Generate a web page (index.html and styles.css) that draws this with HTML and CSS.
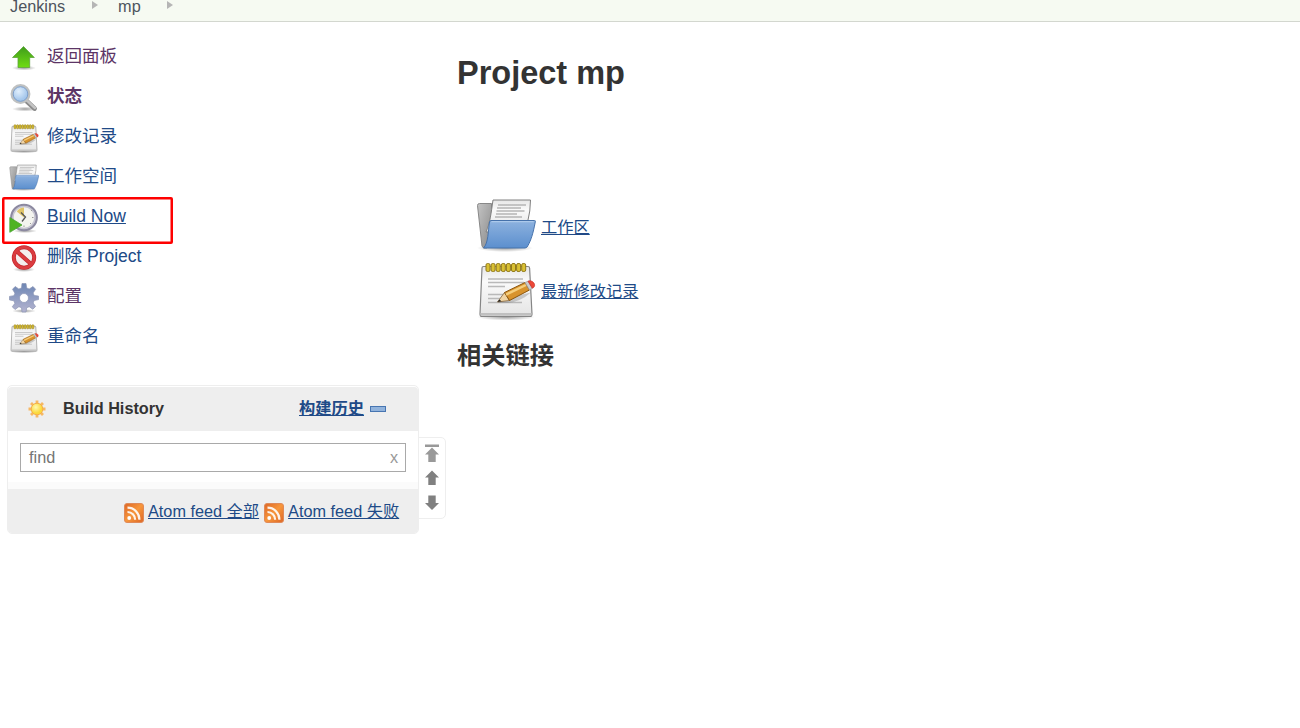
FILE: index.html
```html
<!DOCTYPE html>
<html lang="zh-CN">
<head>
<meta charset="utf-8">
<title>mp [Jenkins]</title>
<link rel="stylesheet" href="styles.css">
</head>
<body>
<svg class="defs" aria-hidden="true">
  <defs>
    <linearGradient id="green" x1="0" y1="0" x2="0" y2="1"><stop offset="0" stop-color="#3f9c1c"/><stop offset="1" stop-color="#6fdc12"/></linearGradient>
    <linearGradient id="blue" x1="0" y1="0" x2="0" y2="1"><stop offset="0" stop-color="#8db2df"/><stop offset="1" stop-color="#5c8fce"/></linearGradient>
    <linearGradient id="paper" x1="0" y1="0" x2="0" y2="1"><stop offset="0" stop-color="#e6e6e6"/><stop offset=".3" stop-color="#fafafa"/><stop offset="1" stop-color="#e4e4e4"/></linearGradient>
    <linearGradient id="gray" x1="0" y1="0" x2="1" y2="1"><stop offset="0" stop-color="#c4c4c4"/><stop offset="1" stop-color="#8a8a8a"/></linearGradient>
    <linearGradient id="steel" x1="0" y1="0" x2="0" y2="1"><stop offset="0" stop-color="#6d86b4"/><stop offset="1" stop-color="#b4b4d0"/></linearGradient>
    <linearGradient id="orange" x1="0" y1="0" x2="1" y2="1"><stop offset="0" stop-color="#dc6626"/><stop offset=".5" stop-color="#f7963c"/><stop offset="1" stop-color="#dc6626"/></linearGradient>
    <radialGradient id="lens" cx=".4" cy=".35"><stop offset="0" stop-color="#e1effc"/><stop offset="1" stop-color="#a5c7ec"/></radialGradient>
    <radialGradient id="sunfill" cx=".4" cy=".35"><stop offset="0" stop-color="#fff9b0"/><stop offset="1" stop-color="#fbd93c"/></radialGradient>
    <radialGradient id="shadow"><stop offset="0" stop-color="#000" stop-opacity=".38"/><stop offset="1" stop-color="#000" stop-opacity="0"/></radialGradient>
  </defs>
  <symbol id="folder" viewBox="0 0 60 60">
    <ellipse cx="29" cy="52" rx="28" ry="4" fill="url(#shadow)"/>
    <path d="M1.500 9.500q0-2 2-2h12v40l-5 4.500H7.500L6 50z" fill="url(#gray)" stroke="#888"/>
    <path d="M17 4H54.500q-.2 12-2.500 20l-14 12H10c4-9 5-18 7-32z" fill="url(#paper)" stroke="#808080"/>
    <path d="M22 9h28M21 12h24M20.500 15h28M20 18h21M19 21h27" stroke="#b5b5b5" stroke-width="1.300"/>
    <path d="M15 24.500H58.500q1.200 0 .8 1.300C57 38 55 44 52 49.500q-1 2.500-3 2.500H7.500c5-5 4.500-17 6-26q.3-1.500 1.500-1.500z" fill="url(#blue)" stroke="#4672ab"/>
    <path d="M15.500 25.700h42" stroke="#b4cfee"/>
  </symbol>
  <symbol id="note" viewBox="0 0 60 60">
    <ellipse cx="30" cy="57" rx="29" ry="3.500" fill="url(#shadow)"/>
    <path d="M7.500 6.500h44.500q1.500 0 1.600 1.500L56 54q0 2.500-2 2.500H6q-2 0-2-2.500L6 8q0-1.500 1.500-1.500z" fill="url(#paper)" stroke="#858585" stroke-width="1.200"/>
    <path d="M4.500 53h51v2.700h-51z" fill="#c0c0c0"/>
    <path d="M12 19h35M12 22.500h36M12 26.500h17M12 34.500h27M12 38.500h22M12 42.500h34" stroke="#b9b9b9" stroke-width="1.500"/>
    <g fill="#d9c033" stroke="#91791b" stroke-width="1"><rect x="10" y="3.500" width="4" height="8" rx="1.500"/><rect x="15.100" y="3.500" width="4" height="8" rx="1.500"/><rect x="20.200" y="3.500" width="4" height="8" rx="1.500"/><rect x="25.300" y="3.500" width="4" height="8" rx="1.500"/><rect x="30.400" y="3.500" width="4" height="8" rx="1.500"/><rect x="35.500" y="3.500" width="4" height="8" rx="1.500"/><rect x="40.600" y="3.500" width="4" height="8" rx="1.500"/><rect x="45.700" y="3.500" width="4" height="8" rx="1.500"/></g>
    <path d="M22 42.500q18 3 33-10l-23 5z" fill="#777" opacity=".35"/>
    <path d="M21.500 42l7-9.500 5 8z" fill="#f0d4a4" stroke="#76552a" stroke-width=".7"/>
    <path d="M28.500 32.500L49 22.500l4.500 7.500-20 10.500z" fill="#d8932d" stroke="#8b560e"/>
    <path d="M29.500 33.500L49.300 24l1.200 2-20 9.800z" fill="#f5ce7c"/>
    <path d="M49 22.500l3-1.300 4.300 7-2.800 1.800z" fill="#ccc" stroke="#999" stroke-width=".7"/>
    <path d="M52 21.200c5-2 9.500 5 4.300 7z" fill="#ec4837" stroke="#c8322c" stroke-width=".7"/>
    <path d="M21.500 42l1.900-2.600 2 1.900z" fill="#222"/>
  </symbol>
  <symbol id="rss" viewBox="0 0 20 20">
    <rect x=".5" y=".5" width="19" height="19" rx="2.500" fill="url(#orange)" stroke="#e08a58"/>
    <circle cx="5.200" cy="15" r="1.900" fill="#fff"/>
    <path d="M3.500 9a7.500 7.500 0 0 1 7.600 7.700M3.500 4.700a11.800 11.800 0 0 1 11.900 12" fill="none" stroke="#fff" stroke-opacity=".9" stroke-width="2.200"/>
  </symbol>
</svg>

<nav class="breadcrumbs">
  <span>Jenkins</span><i class="crumb-arrow"></i><span>mp</span><i class="crumb-arrow last"></i>
</nav>

<div class="layout">
  <aside class="side">
    <ul class="tasks">
      <li><svg class="icon" viewBox="0 0 30 30"><ellipse cx="15" cy="25" rx="12" ry="2.500" fill="url(#shadow)"/><path d="M14.500 3.500L25.300 14.500H20.700V24.500H9V14.500H3.500z" fill="url(#green)" stroke="#5fa33d" stroke-width=".8"/></svg><a class="visited">返回面板</a></li>
      <li><svg class="icon" viewBox="0 0 30 30"><ellipse cx="16" cy="26" rx="13" ry="2.500" fill="url(#shadow)"/><path d="M17.500 18l8 7.500" stroke="#8b8b8b" stroke-width="4.800" stroke-linecap="round"/><path d="M18 17.500l8 7.500" stroke="#c4c4c4" stroke-width="2.500" stroke-linecap="round"/><circle cx="11.500" cy="11" r="8.700" fill="url(#lens)" stroke="#bfc1c1" stroke-width="2.500"/><circle cx="11.500" cy="11" r="7.300" fill="none" stroke="#7e9fca"/></svg><a class="visited current">状态</a></li>
      <li><svg class="icon"><use href="#note"/></svg><a>修改记录</a></li>
      <li><svg class="icon"><use href="#folder"/></svg><a>工作空间</a></li>
      <li><svg class="icon" viewBox="0 0 30 30"><ellipse cx="16" cy="28" rx="12" ry="2" fill="url(#shadow)"/><circle cx="15" cy="14.500" r="12.600" fill="#f4f4ef" stroke="#8c89a0" stroke-width="2.500"/><circle cx="15" cy="14.500" r="11" fill="none" stroke="#c6c4d1" stroke-width="1.500"/><path d="M15 14.500L7.800 8.500Q10.500 4.500 15 4.500z" fill="#e0c568"/><path d="M12 9.500l4.500 4.500-3.500 4.500" fill="none" stroke="#555" stroke-width="1.300"/><path d="M23 7l-1 1M24.500 14.500h-1.500M15 24v-1.500M22 21l-1-1" stroke="#999"/><path d="M.8 14.500L13 22 .8 29.300z" fill="#4eb322" stroke="#49a431" stroke-width=".8"/></svg><a class="hover">Build Now</a></li>
      <li><svg class="icon" viewBox="0 0 30 30"><ellipse cx="15" cy="26.500" rx="11" ry="2.500" fill="url(#shadow)"/><circle cx="15" cy="14.500" r="10.200" fill="#f4eeee" stroke="#c2272c" stroke-width="4"/><path d="M8 8.500l14 12.500" stroke="#c2272c" stroke-width="4.200"/><circle cx="15" cy="14.500" r="10.200" fill="none" stroke="#db3c40" stroke-width="2.600"/><path d="M8 8.500l14 12.500" stroke="#db3c40" stroke-width="2.800"/></svg><a>删除 Project</a></li>
      <li><svg class="icon" viewBox="0 0 30 30"><ellipse cx="15" cy="28" rx="12" ry="2" fill="url(#shadow)"/><path fill-rule="evenodd" d="M12.500 5L13 .5h4l.7 4.500 2.500 1L24 3.500l2.600 2.800-2.500 3.600 1 2.500 4.400.7v3.500l-4.400.9-1 2.500 2.500 3.500-2.800 2.700-3.600-2.500-2.500 1L17 29h-4l-.5-4.300-2.600-1L6 26.500l-2.700-2.700 2.600-3.500-1-2.500-4.400-.9v-3.500l4.400-.7 1-2.500L3.500 6.300 6.200 3.500l3.600 2.500zM15 10.500a4.500 4.500 0 1 0 0 9 4.500 4.500 0 0 0 0-9z" fill="url(#steel)" stroke="#8b95b4" stroke-width=".7"/></svg><a class="visited">配置</a></li>
      <li><svg class="icon"><use href="#note"/></svg><a>重命名</a></li>
    </ul>

    <section class="history">
      <header class="history-head">
        <svg class="sun" viewBox="0 0 20 20"><path d="M10 1.500v17M1.500 10h17M4 4l12 12M16 4L4 16" stroke="#f7b863" stroke-width="2.800"/><circle cx="10" cy="10" r="5.800" fill="url(#sunfill)" stroke="#f4b04a"/></svg>
        <strong>Build History</strong>
        <a class="trend">构建历史</a>
        <svg class="collapse" viewBox="0 0 16 6"><rect x=".5" y=".5" width="15" height="5" fill="#91b3dc" stroke="#4775b1"/></svg>
      </header>
      <div class="search"><span>find</span><span class="clear">x</span></div>
      <div class="strip"></div>
      <footer class="feeds">
        <svg class="rss"><use href="#rss"/></svg><a>Atom feed 全部</a><svg class="rss second"><use href="#rss"/></svg><a>Atom feed 失败</a>
      </footer>
      <div class="pager">
        <svg viewBox="0 0 16 20"><path d="M1 1.500h14v2.500H1zM8 4.500l7 7h-3.300V19H4.300v-7.500H1z" fill="#999"/></svg>
        <svg viewBox="0 0 16 20"><path d="M8 2.500l7 7h-3.300v7.500H4.300V9.500H1z" fill="#808080"/></svg>
        <svg viewBox="0 0 16 20"><path d="M8 17l7-7h-3.300V2.500H4.300V10H1z" fill="#808080"/></svg>
      </div>
    </section>
    <div class="highlight"></div>
  </aside>

  <main class="main">
    <h1>Project mp</h1>
    <div class="link-row"><svg class="big"><use href="#folder"/></svg><a>工作区</a></div>
    <div class="link-row"><svg class="big"><use href="#note"/></svg><a>最新修改记录</a></div>
    <h2>相关链接</h2>
  </main>
</div>
</body>
</html>
```

FILE: styles.css
```css
* { box-sizing: border-box; }
body {
  margin: 0;
  height: 728px;
  overflow: hidden;
  background: #fff;
  color: #333;
  font: 16.25px/20px "Liberation Sans", "Noto Sans CJK SC", sans-serif;
}
.defs { position: absolute; width: 0; height: 0; }
svg { display: block; flex: none; }
a { color: #204a87; text-decoration: underline; white-space: nowrap; }

.breadcrumbs {
  display: flex;
  height: 22px;
  padding-left: 10px;
  background: #f6faf2;
  border-bottom: 1px solid #d3d7cf;
  color: #4d545d;
}
.breadcrumbs span { margin-top: -4px; }
.crumb-arrow {
  width: 0;
  height: 0;
  margin: 1px 20px 0 27px;
  border: 4.5px solid transparent;
  border-left: 6px solid #b5b5b5;
  border-right: 0;
}
.crumb-arrow.last { margin-left: 26px; }
.layout { display: flex; }
.side { position: relative; width: 457px; padding: 14px 0 0 7px; flex: none; }

.tasks { list-style: none; margin: 0; padding: 0; }
.tasks li {
  display: flex;
  align-items: center;
  gap: 8px;
  height: 40px;
  padding-left: 2px;
  font-size: 17.55px;
}
.tasks a { text-decoration: none; }
.tasks .visited { color: #5c3566; }
.tasks .current { font-weight: bold; }
.tasks .hover { text-decoration: underline; }
.icon { width: 30px; height: 30px; margin-top: 3px; }
.highlight {
  position: absolute;
  left: 2px;
  top: 175px;
  width: 171px;
  height: 47px;
  border: 2px solid #fe0000;
  border-radius: 2px;
  box-shadow: inset 0 0 0 .5px #fe0000;
}

.history {
  position: relative;
  width: 412px;
  height: 149px;
  margin-top: 29px;
  border: 1px solid #eee;
  border-radius: 5px;
}
.history-head {
  display: flex;
  align-items: center;
  height: 44px;
  margin-top: 1px;
  padding-left: 19px;
  background: #eee;
  border-radius: 4px 4px 0 0;
}
.history-head strong, .history-head .trend { margin-top: -2px; }
.sun { width: 20px; height: 20px; margin-right: 16px; }
.history-head .trend { margin-left: auto; font-weight: bold; }
.collapse { width: 16px; height: 6px; margin: 0 32px 0 6px; }
.search {
  display: flex;
  justify-content: space-between;
  height: 29px;
  margin: 12px 12px 10px;
  padding: 3px 7px 0 8px;
  border: 1px solid #a9a9a9;
  color: #757575;
}
.clear { color: #999; }
.strip { height: 7px; background: #fbfbfb; }
.feeds {
  display: flex;
  align-items: center;
  height: 44px;
  padding-left: 116px;
  background: #eee;
  border-radius: 0 0 4px 4px;
}
.rss { width: 20px; height: 20px; margin: 4px 4px 0 0; }
.rss.second { margin-left: 5px; }
.pager {
  position: absolute;
  left: 410px;
  top: 51px;
  width: 28px;
  height: 82px;
  padding: 5px 0 0 5px;
  border: 1px solid #eee;
  border-radius: 0 5px 5px 0;
}
.pager svg { width: 16px; height: 20px; margin-bottom: 5px; }

.main { padding-top: 31px; }
h1 { margin: 0 0 98px; font-size: 32.5px; line-height: 40px; }
.link-row { display: flex; align-items: center; height: 64px; padding-left: 19px; gap: 5px; }
.link-row a { margin-top: 8px; }
.big { width: 60px; height: 60px; margin-top: 6px; }
h2 { margin: 21px 0 0; font-size: 24.25px; line-height: 32px; }
```
